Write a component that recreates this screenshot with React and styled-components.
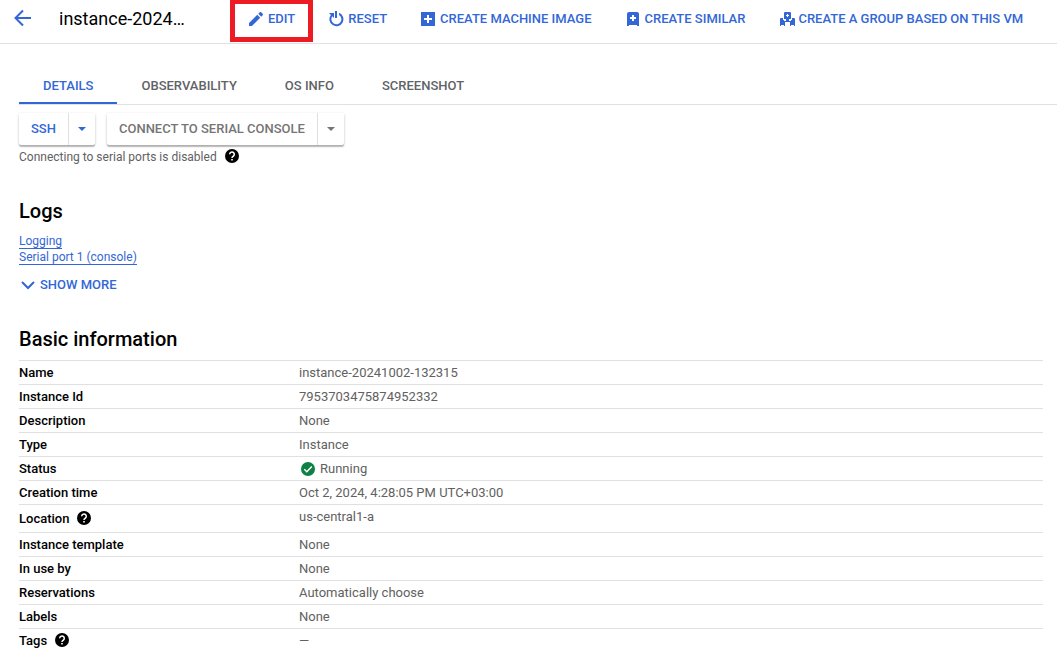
import React from "react";
import styled, { createGlobalStyle } from "styled-components";

const blue = "#3367d6";
const line = "#e0e0e0";

const toolbarActions = [
	{ label: "Edit", icon: "edit", marked: true },
	{ label: "Reset", icon: "reset" },
	{ label: "Create machine image", icon: "image" },
	{ label: "Create similar", icon: "similar" },
	{ label: "Create a group based on this VM", icon: "group" },
];

const tabs = ["Details", "Observability", "OS info", "Screenshot"];

const info = [
	{ name: "Name", value: "instance-20241002-132315" },
	{ name: "Instance Id", value: "7953703475874952332" },
	{ name: "Description", value: "None" },
	{ name: "Type", value: "Instance" },
	{ name: "Status", value: "Running", ok: true },
	{ name: "Creation time", value: "Oct 2, 2024, 4:28:05 PM UTC+03:00" },
	{ name: "Location", value: "us-central1-a", help: true, tall: true },
	{ name: "Instance template", value: "None" },
	{ name: "In use by", value: "None" },
	{ name: "Reservations", value: "Automatically choose" },
	{ name: "Labels", value: "None" },
	{ name: "Tags", value: "—", help: true },
];

const icons = {
	edit: (
		<path d="M2 13.1V16h2.9l8.3-8.3-2.9-2.9L2 13.1zM15.7 5.2c.4-.4.4-1 0-1.4l-1.5-1.5c-.4-.4-1-.4-1.4 0l-1.5 1.5 2.9 2.9 1.5-1.5z" />
	),
	reset: (
		<>
			<path d="M8 1h2v7H8z" />
			<path d="M2 3h5v5L5.300 6.300A5 5 0 1 0 12 5V2.700A7 7 0 1 1 3.900 4.900z" />
		</>
	),
	image: (
		<path
			fillRule="evenodd"
			d="M2 2h14v14H2zM8 5v3H5v2h3v3h2v-3h3V8h-3V5z"
		/>
	),
	similar: (
		<path
			fillRule="evenodd"
			d="M5 2h8a2 2 0 0 1 2 2v12h-2v-1H5v1H3V4a2 2 0 0 1 2-2zM8 5v2H6v2h2v2h2V9h2V7h-2V5z"
		/>
	),
	group: (
		<>
			<path
				fillRule="evenodd"
				d="M8 2h5a1 1 0 0 1 1 1v6h-2v1H9V9H7V3a1 1 0 0 1 1-1zM10 4v1H9v1h1v1h1V6h1V5h-1V4z"
			/>
			<path d="M4 8h2v2h1v1h1v5H7v-1H4v1H3V9a1 1 0 0 1 1-1z" />
			<path d="M15 8h2a1 1 0 0 1 1 1v7h-1v-1h-3v1h-1v-5h1v-1h1z" />
			<path d="M8 11h1v-1h3v1h1v1H8z" />
		</>
	),
};

const HelpIcon = () => (
	<Help type="button" aria-label="Help">
		<svg width="18" height="18" viewBox="0 1 18 18">
			<circle cx="9" cy="9" r="7" fill="#000" />
			<path
				d="M6.700 7.300a2.300 2.300 0 1 1 3.700 1.800C9.500 9.800 9 10 9 11"
				fill="none"
				stroke="#fff"
				strokeWidth="1.500"
			/>
			<path d="M8.200 12h1.600v1.600H8.200z" fill="#fff" />
		</svg>
	</Help>
);

const CheckIcon = () => (
	<svg width="18" height="18" viewBox="0 0 18 18">
		<circle cx="9" cy="9" r="7" fill="#0d8043" />
		<path d="M5.300 9.300l2.500 2.500 5-5.200" fill="none" stroke="#fff" strokeWidth="1.500" />
	</svg>
);

const Caret = () => (
	<svg width="8" height="4" viewBox="0 0 8 4" fill="currentColor">
		<path d="M0 0h8L4 4z" />
	</svg>
);

const App = () => {
	return (
		<>
			<GlobalStyle />
			<Toolbar>
				<Back href="#" aria-label="Back">
					<svg width="24" height="24" viewBox="0 0 24 24" fill="none" stroke="currentColor" strokeWidth="2">
						<path d="M20 11H5.500M12 3.500L4.500 11l7.500 7.500" />
					</svg>
				</Back>
				<Title>instance-2024…</Title>
				<Actions>
					{toolbarActions.map((a) => (
						<Action key={a.icon} type="button" $marked={a.marked}>
							<svg width="18" height="18" viewBox="0 0 18 18" fill="currentColor">
								{icons[a.icon]}
							</svg>
							{a.label}
						</Action>
					))}
				</Actions>
			</Toolbar>
			<Tabs>
				{tabs.map((t, i) => (
					<Tab key={t} href="#" $active={i === 0}>
						{t}
					</Tab>
				))}
			</Tabs>
			<Content>
				<Connect>
					<Split $color={blue}>
						<button type="button">SSH</button>
						<button type="button" aria-label="SSH options">
							<Caret />
						</button>
					</Split>
					<Split $color="#757575">
						<button type="button">Connect to serial console</button>
						<button type="button" aria-label="Serial console options">
							<Caret />
						</button>
					</Split>
				</Connect>
				<Hint>
					Connecting to serial ports is disabled
					<HelpIcon />
				</Hint>
				<Heading>Logs</Heading>
				<Links>
					<li>
						<a href="#">Logging</a>
					</li>
					<li>
						<a href="#">Serial port 1 (console)</a>
					</li>
				</Links>
				<ShowMore type="button">
					<svg width="18" height="18" viewBox="0 0 18 18" fill="none" stroke="currentColor" strokeWidth="2">
						<path d="M3 6l6 6 6-6" />
					</svg>
					Show more
				</ShowMore>
				<Heading>Basic information</Heading>
				<InfoTable>
					<tbody>
						{info.map((row) => (
							<Row key={row.name} $tall={row.tall}>
								<th scope="row">
									<Cell>
										{row.name}
										{row.help && <HelpIcon />}
									</Cell>
								</th>
								<td>
									<Cell $tight={row.ok}>
										{row.ok && <CheckIcon />}
										{row.value}
									</Cell>
								</td>
							</Row>
						))}
					</tbody>
				</InfoTable>
			</Content>
		</>
	);
};

const GlobalStyle = createGlobalStyle`
	* {
		box-sizing: border-box;
	}
	body {
		margin: 0;
		background: #fff;
		color: #000;
		font-family: Roboto, Arial, sans-serif;
		font-size: 13px;
		line-height: 16px;
		overflow-x: hidden;
	}
	button {
		margin: 0;
		padding: 0;
		border: 0;
		background: none;
		color: inherit;
		font: inherit;
		text-transform: inherit;
		cursor: pointer;
	}
	svg {
		display: block;
		flex: none;
	}
`;
const Toolbar = styled.header`
	display: flex;
	align-items: center;
	height: 44px;
	padding: 0 12px 6px 11px;
	border-bottom: 1px solid ${line};
`;
const Back = styled.a`
	color: ${blue};
`;
const Title = styled.h1`
	width: 128px;
	margin: 0 44px 0 24px;
	font-size: 18px;
	font-weight: 400;
	line-height: 24px;
	white-space: nowrap;
`;
const Actions = styled.div`
	display: flex;
`;
const Action = styled.button`
	display: flex;
	align-items: center;
	gap: 3px;
	height: 32px;
	padding: 0 16px;
	color: ${blue};
	font-weight: 500;
	text-transform: uppercase;
	white-space: nowrap;
	position: relative;

	/* red frame round the action to press */
	&::after {
		content: "";
		display: ${(p) => (p.$marked ? "block" : "none")};
		position: absolute;
		inset: -4px -2px -7px -1px;
		border: 5px solid #ed1c24;
	}
`;
const Tabs = styled.nav`
	display: flex;
	margin: 24px 0 0 19px;
	border-bottom: 1px solid ${line};
`;
const Tab = styled.a`
	padding: 10px 24px 8px;
	border-bottom: 2px solid ${(p) => (p.$active ? blue : "transparent")};
	color: ${(p) => (p.$active ? blue : "#5f6368")};
	font-weight: 500;
	text-decoration: none;
	text-transform: uppercase;
`;
const Content = styled.main`
	padding: 8px 14px 0 19px;
`;
const Connect = styled.div`
	display: flex;
	gap: 12px;
`;
const Split = styled.div`
	display: flex;
	height: 32px;
	border-radius: 2px;
	color: ${(p) => p.$color};
	font-weight: 500;
	text-transform: uppercase;
	box-shadow: 0 1px 3px rgba(0, 0, 0, 0.2), 0 2px 1px rgba(0, 0, 0, 0.2);

	button {
		padding: 0 12px;
	}
	button + button {
		padding: 0 9px;
		border-left: 1px solid ${line};
	}
`;
const Help = styled.button`
	flex: none;
`;
const Hint = styled.div`
	display: flex;
	align-items: center;
	gap: 6px;
	margin-top: 3px;
	color: #616161;
	font-size: 12px;
`;
const Heading = styled.h2`
	margin: 33px 0 9px;
	font-size: 20px;
	font-weight: 500;
	line-height: 24px;
`;
const Links = styled.ul`
	margin: 0;
	padding: 1px 0 0;
	list-style: none;
	font-size: 12px;

	a {
		color: ${blue};
		text-decoration: none;
		border-bottom: 1px solid ${blue};
	}
`;
const ShowMore = styled.button`
	display: flex;
	align-items: center;
	gap: 3px;
	margin-top: 11px;
	color: ${blue};
	font-weight: 500;
	text-transform: uppercase;
`;
const InfoTable = styled.table`
	width: 100%;
	border-collapse: collapse;
	table-layout: fixed;

	th {
		width: 280px;
		padding: 0;
		font-weight: 500;
		text-align: left;
		vertical-align: middle;
	}
	td {
		padding: 3px 0 0;
		color: #616161;
		vertical-align: top;
	}
`;
const Row = styled.tr`
	height: ${(p) => (p.$tall ? 28 : 24)}px;
	border-top: 1px solid ${line};
`;
const Cell = styled.div`
	display: flex;
	align-items: center;
	gap: ${(p) => (p.$tight ? 3 : 6)}px;
	min-height: 18px;
`;
export default App;
